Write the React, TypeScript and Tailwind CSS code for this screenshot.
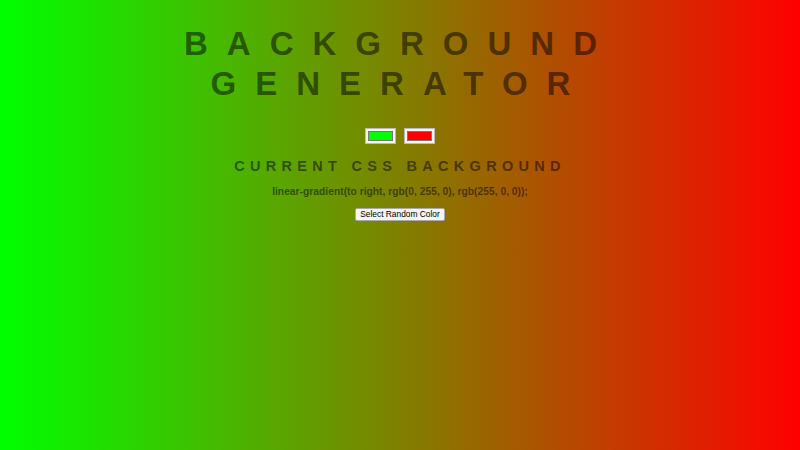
import React from "react";

export default function App() {
  return (
    <div
      className="w-[800px] h-[450px] overflow-hidden flex flex-col items-center text-center text-[rgba(0,0,0,0.52)]"
      style={{ background: "linear-gradient(to right, rgb(0, 255, 0), rgb(255, 0, 0))", fontFamily: '"Liberation Sans", Arial, sans-serif' }}
    >
      <h1 className="mt-[24px] w-full text-[33px] leading-[40px] font-bold tracking-[19px] uppercase">
        Background Generator
      </h1>
      <div className="mt-[24px] flex flex-row gap-[8px]">
        <div className="w-[31px] h-[16px] bg-[#f4f4f4] border border-[#bbb] p-[2px]">
          <div className="w-full h-full bg-[#00ff00] border border-[#777]" />
        </div>
        <div className="w-[31px] h-[16px] bg-[#f4f4f4] border border-[#bbb] p-[2px]">
          <div className="w-full h-full bg-[#ff0000] border border-[#777]" />
        </div>
      </div>
      <h3 className="mt-[14px] text-[14.5px] leading-[16px] font-bold tracking-[5.3px] uppercase">
        Current CSS Background
      </h3>
      <p className="mt-[11px] text-[10.3px] leading-[14px] font-bold">
        linear-gradient(to right, rgb(0, 255, 0), rgb(255, 0, 0));
      </p>
      <button className="mt-[9px] h-[13px] px-[4px] bg-[#f4f4f4] border border-[#aaa] rounded-[2px] text-black text-[8.4px] leading-[11px]">
        Select Random Color
      </button>
    </div>
  );
}
